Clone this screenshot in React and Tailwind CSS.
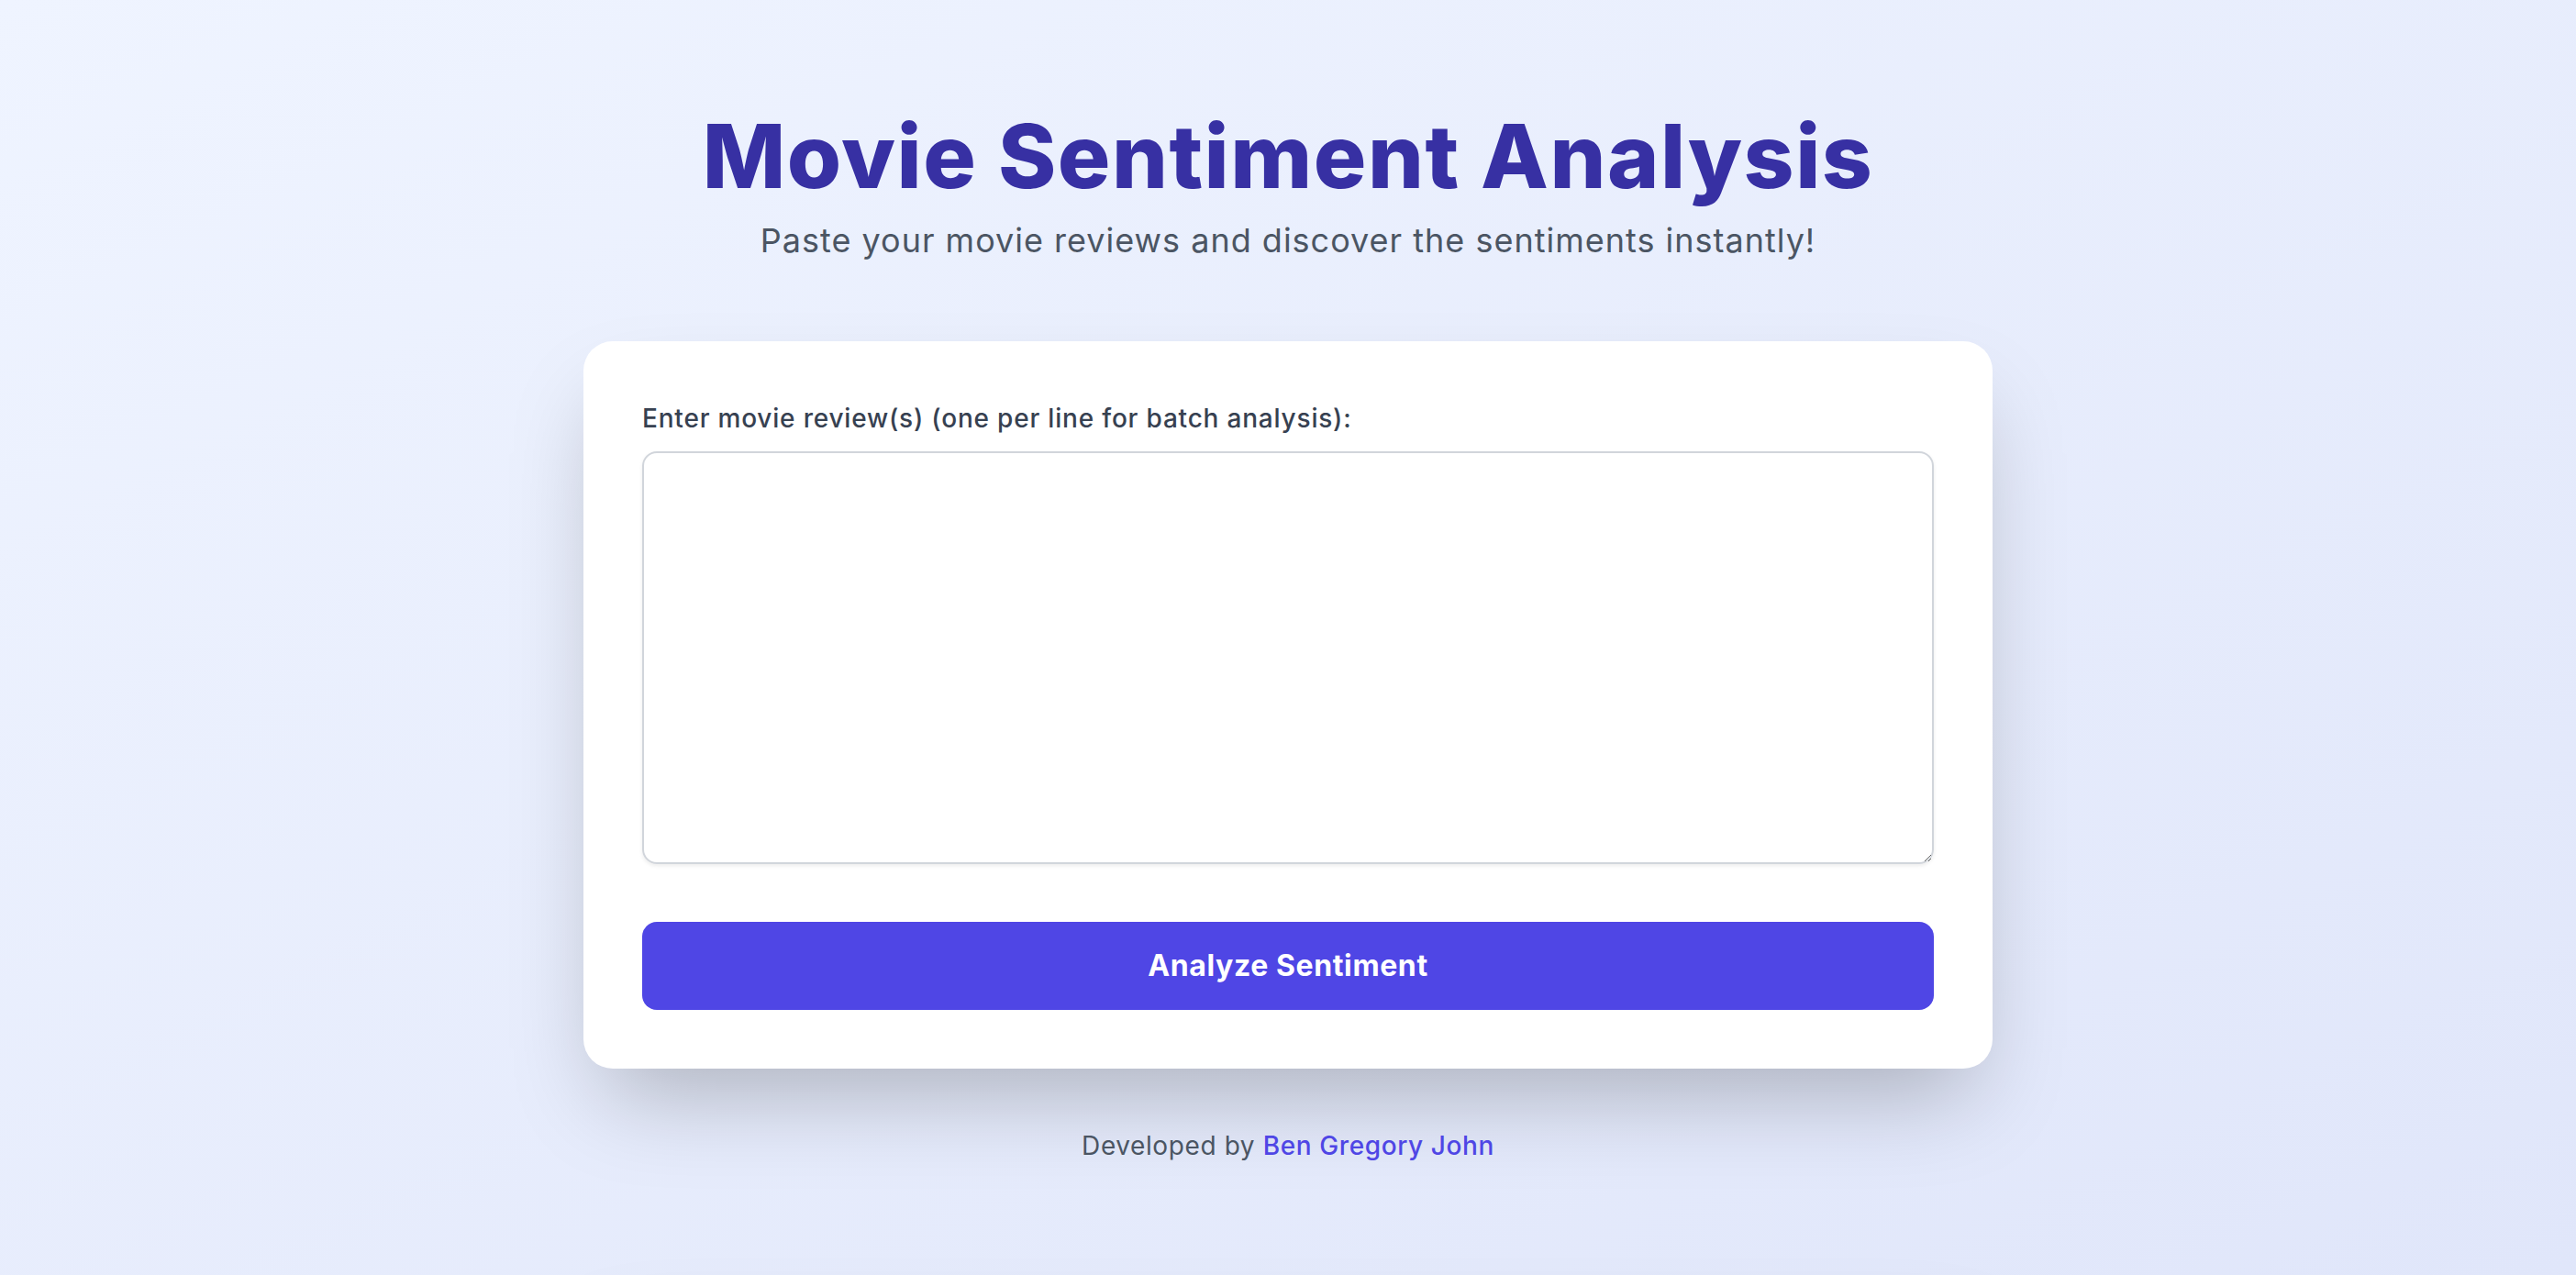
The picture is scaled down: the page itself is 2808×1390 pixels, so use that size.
import React, { useState } from "react";

const App = () => {
  const [reviews, setReviews] = useState("");

  return (
    <div
      className="h-screen w-full overflow-hidden bg-gradient-to-br from-[#eff4ff] to-[#e0e6fa] flex flex-col items-center pt-[122px]"
      style={{ fontFamily: "Inter, 'Noto Sans', sans-serif" }}
    >
      {/* Header */}
      <h1 className="text-[96px] leading-[96px] font-extrabold text-[#3730a3] tracking-[1.5px] mb-[16px]">
        Movie Sentiment Analysis
      </h1>
      <p className="text-[36px] leading-[56px] text-[#4b5563] tracking-[1px]">
        Paste your movie reviews and discover the sentiments instantly!
      </p>

      {/* Input card */}
      <div className="mt-[82px] w-[1536px] bg-white rounded-[32px] p-[64px] shadow-[0_50px_100px_-24px_rgba(0,0,0,0.25)]">
        <label className="block text-[28px] leading-[40px] font-medium text-[#374151] tracking-[0.8px] mb-[16px]">
          Enter movie review(s) (one per line for batch analysis):
        </label>
        <textarea
          value={reviews}
          onChange={(e) => setReviews(e.target.value)}
          className="block w-full h-[450px] border-2 border-[#d1d5db] rounded-[16px] p-[24px] text-[28px] text-[#374151] shadow-[0_2px_4px_rgba(0,0,0,0.08)] focus:outline-none"
        />
        <button
          type="button"
          className="mt-[63px] w-full h-[96px] bg-[#4f46e5] text-white text-[32px] leading-[48px] font-bold tracking-[0.6px] rounded-[16px]"
        >
          Analyze Sentiment
        </button>
      </div>

      {/* Footer */}
      <p className="mt-[64px] text-[28px] leading-[40px] text-[#4b5563] tracking-[0.6px]">
        Developed by{" "}
        <a href="#" className="text-[#4f46e5] font-medium">
          Ben Gregory John
        </a>
      </p>

      {/* Results card (below the fold) */}
      <div className="mt-[134px] w-[1536px] h-[400px] shrink-0 bg-white rounded-[32px] shadow-[0_50px_100px_-24px_rgba(0,0,0,0.25)]"></div>
    </div>
  );
};

export default App;
